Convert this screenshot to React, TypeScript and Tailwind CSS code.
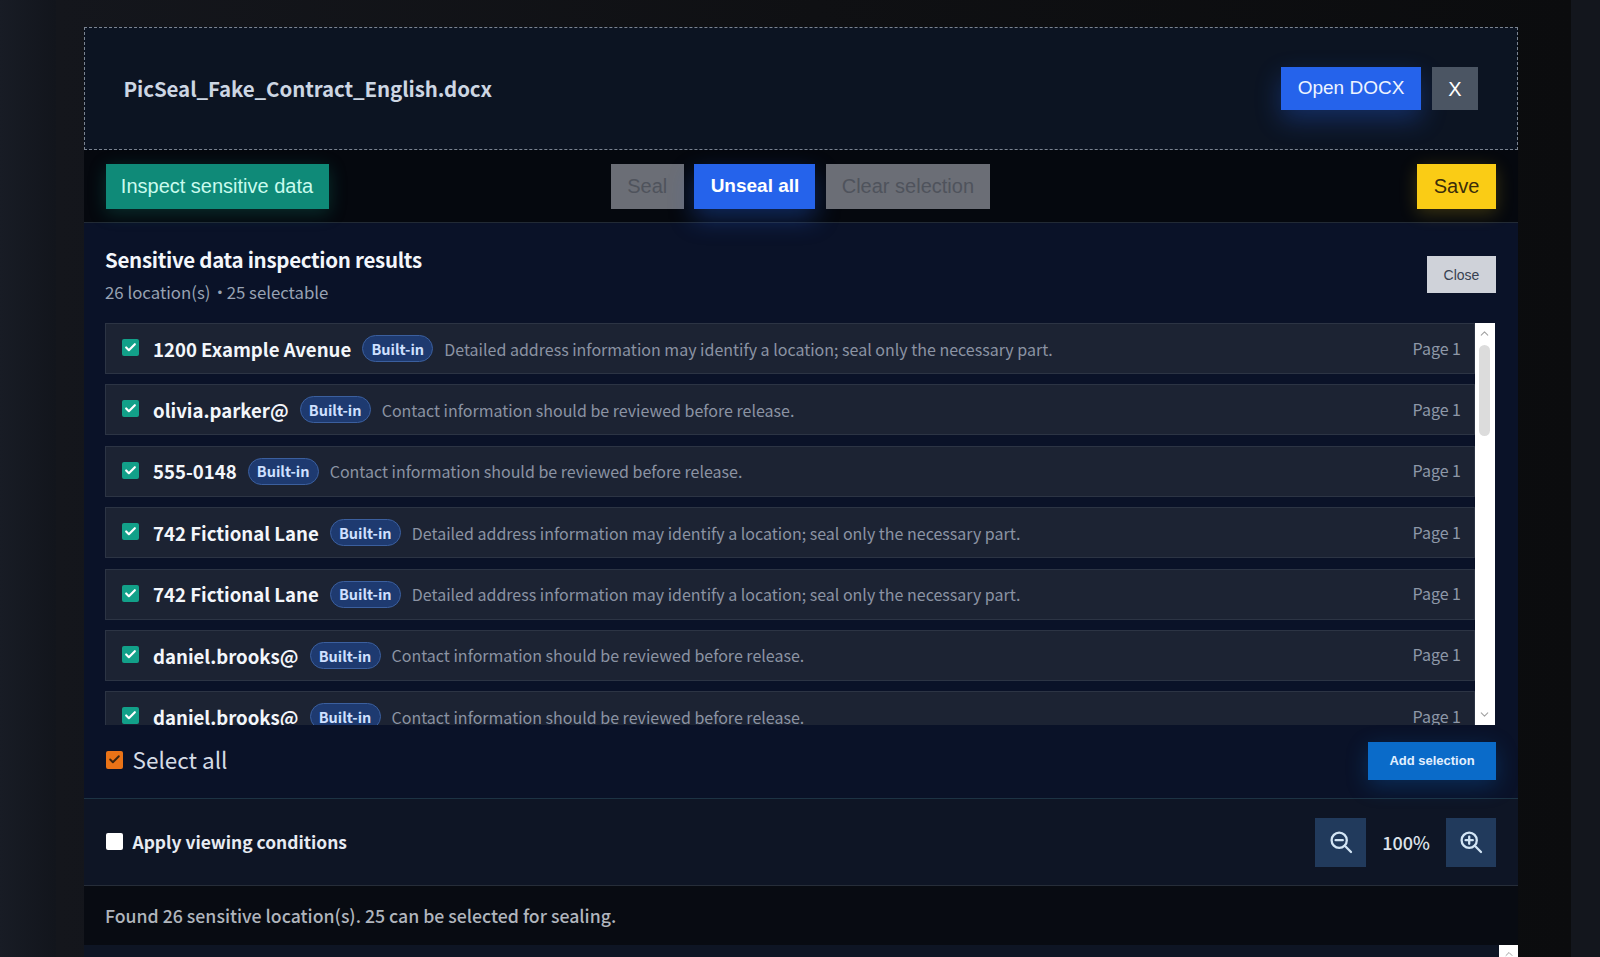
import { Check, ChevronUp, ChevronDown } from "lucide-react";

const rows = [
  ["1200 Example Avenue", "Detailed address information may identify a location; seal only the necessary part."],
  ["olivia.parker@", "Contact information should be reviewed before release."],
  ["555-0148", "Contact information should be reviewed before release."],
  ["742 Fictional Lane", "Detailed address information may identify a location; seal only the necessary part."],
  ["742 Fictional Lane", "Detailed address information may identify a location; seal only the necessary part."],
  ["daniel.brooks@", "Contact information should be reviewed before release."],
  ["daniel.brooks@", "Contact information should be reviewed before release."],
];

const cjk = "font-['Noto_Sans_CJK_SC','Noto_Sans',sans-serif]";
const arial = "font-['Liberation_Sans',Arial,sans-serif]";

function Magnifier({ plus }: { plus?: boolean }) {
  return (
    <svg width="24" height="24" viewBox="0 0 24 24" fill="none" stroke="#d3e5f5" strokeWidth="2.3" strokeLinecap="round">
      <circle cx="10.2" cy="10.2" r="7.6" />
      <path d="M15.8 15.8 L22 22" />
      <path d="M6.6 10.2 H13.8" />
      {plus && <path d="M10.2 6.6 V13.8" />}
    </svg>
  );
}

export default function App() {
  return (
    <div className={`h-[957px] w-[1600px] overflow-hidden flex bg-[#0a0b0f] ${cjk}`}>
      <div className="w-[56px] shrink-0 bg-gradient-to-r from-[#181c25] to-[#12151c]" />
      <div className="w-[1515px] shrink-0 bg-gradient-to-r from-[#14161c] via-[#0f1013] to-[#0b0c0e] flex flex-col pl-[27.5px] pr-[53px] pt-[27px]">
        <div className="h-[123px] shrink-0 border border-dashed border-[#7b8491] bg-[#0c1422] flex items-center justify-between pl-[39px] pr-[39px]">
          <span className="text-[20.5px] font-bold tracking-[-0.1px] text-[#cdd6e3] leading-none">PicSeal_Fake_Contract_English.docx</span>
          <div className="flex gap-[11px] items-center">
            <button className={`${arial} h-[43px] w-[140px] bg-[#2563eb] text-[#eef4ff] text-[19px] shadow-[0_10px_26px_rgba(37,99,235,0.32)]`}>Open DOCX</button>
            <button className={`${arial} h-[43px] w-[46px] bg-[#4b5563] text-white text-[20px]`}>X</button>
          </div>
        </div>
        <div className="h-[73px] shrink-0 bg-[#05080e] border-b border-[#222a35] relative flex items-center justify-between px-[22px]">
          <button className={`${arial} h-[45px] w-[223px] bg-[#0f8a78] text-[#c9fbee] text-[20px] shadow-[0_4px_18px_rgba(15,138,120,0.3)]`}>Inspect sensitive data</button>
          <div className="flex gap-[10.4px] absolute left-[527px] top-[14px]">
            <button className={`${arial} h-[45px] w-[73.6px] pb-[1px] bg-[#6b6e76] text-[#4f535c] text-[20px]`}>Seal</button>
            <button className={`${arial} h-[45px] w-[121px] bg-[#2563eb] text-white text-[19px] font-bold shadow-[0_10px_24px_rgba(37,99,235,0.35)]`}>Unseal all</button>
            <button className={`${arial} h-[45px] w-[164px] pb-[1px] bg-[#6b6e76] text-[#4f535c] text-[20px]`}>Clear selection</button>
          </div>
          <button className={`${arial} h-[45px] w-[79px] bg-[#facc15] text-[#3a2d0a] text-[20px] shadow-[0_4px_18px_rgba(250,204,21,0.22)]`}>Save</button>
        </div>
        <div className="h-[576px] shrink-0 bg-[#0a1228] border-b border-[#1d3344] flex flex-col pl-[21.5px] pr-[22px]">
          <div className="h-[100px] shrink-0 flex justify-between">
            <div className="pt-[21px]">
              <div className="text-[20.5px] font-bold tracking-[-0.3px] text-[#f3f6fb] leading-[30px]">Sensitive data inspection results</div>
              <div className="text-[16.8px] text-[#98a2b3] leading-[26px] mt-[5px]">26 location(s)<span className="tracking-[-2.7px]"> · </span> 25 selectable</div>
            </div>
            <button className={`${arial} mt-[33px] h-[37px] w-[69px] pt-[1px] bg-[#cfd2d9] text-[#374151] text-[14px]`}>Close</button>
          </div>
          <div className="h-[402px] shrink-0 flex overflow-hidden">
            <div className="w-[1370px] shrink-0">
              {rows.map((r, i) => (
                <div key={i} className="h-[51px] mb-[10.4px] flex items-center bg-[#1c2333] border border-[#2c3444] pl-[15.5px] pr-[13px]">
                  <span className="w-[17px] h-[17px] rounded-[2px] bg-[#12a089] flex items-center justify-center shrink-0 relative -top-[1px]">
                    <Check size={13} strokeWidth={4} className="text-white" />
                  </span>
                  <span className="ml-[14.5px] text-[18.6px] font-bold text-[#f3f6fb] whitespace-nowrap">{r[0]}</span>
                  <span className="ml-[11px] h-[27px] w-[71px] rounded-full border border-[#3b5f9e] bg-[#1e3a70] text-[#cfe0ff] text-[14.5px] font-bold flex items-center justify-center shrink-0">Built-in</span>
                  <span className="ml-[11px] text-[16px] text-[#8b93a3] whitespace-nowrap">{r[1]}</span>
                  <span className="ml-auto text-[16px] text-[#8e98a8] whitespace-nowrap relative -top-[1px]">Page 1</span>
                </div>
              ))}
            </div>
            <div className="w-[19.5px] shrink-0 bg-white flex flex-col items-center relative">
              <ChevronUp size={13} strokeWidth={2} className="text-[#a3a3a3] mt-[4px]" />
              <div className="w-[11px] h-[91px] rounded-full bg-[#dcdcdc] mt-[5px]" />
              <ChevronDown size={13} strokeWidth={2} className="text-[#a3a3a3] absolute bottom-[4px]" />
            </div>
          </div>
          <div className="flex-1 flex items-center justify-between">
            <div className="flex items-center pl-[0.5px]">
              <span className="w-[17px] h-[18px] rounded-[2px] bg-[#ea7317] flex items-center justify-center relative -top-[2px]">
                <Check size={13} strokeWidth={3.5} className="text-[#3a2410]" />
              </span>
              <span className="ml-[10px] text-[22.5px] text-[#d5dbe5] relative -top-[2px]">Select all</span>
            </div>
            <button className={`${arial} h-[38px] w-[128px] relative -top-[1px] bg-[#0a6bc9] text-[#e2f0ff] text-[13px] font-bold shadow-[0_6px_22px_rgba(10,107,201,0.3)]`}>Add selection</button>
          </div>
        </div>
        <div className="h-[87px] shrink-0 bg-[#0e1525] border-b border-[#262d39] flex items-center justify-between pl-[22px] pr-[22px]">
          <div className="flex items-center">
            <span className="w-[17px] h-[17px] rounded-[2px] bg-white" />
            <span className="ml-[10px] text-[17.4px] font-bold text-[#e7ebf2]">Apply viewing conditions</span>
          </div>
          <div className="flex items-center">
            <button className="w-[51px] h-[49px] bg-[#213a5c] flex items-center justify-center"><Magnifier /></button>
            <span className="w-[80px] text-center text-[18px] font-medium text-[#dde2ea]">100%</span>
            <button className="w-[50px] h-[49px] bg-[#213a5c] flex items-center justify-center"><Magnifier plus /></button>
          </div>
        </div>
        <div className="h-[59px] shrink-0 bg-[#080b12] flex items-center px-[21.5px]">
          <span className="text-[17.7px] font-medium text-[#b0b5bd]">Found 26 sensitive location(s). 25 can be selected for sealing.</span>
        </div>
        <div className="flex-1 bg-[#0e1524] flex justify-end">
          <div className="w-[19px] bg-white flex justify-center"><ChevronUp size={12} className="text-[#a3a3a3] mt-[3px]" /></div>
        </div>
      </div>
      <div className="flex-1 bg-[#13161d]" />
    </div>
  );
}
